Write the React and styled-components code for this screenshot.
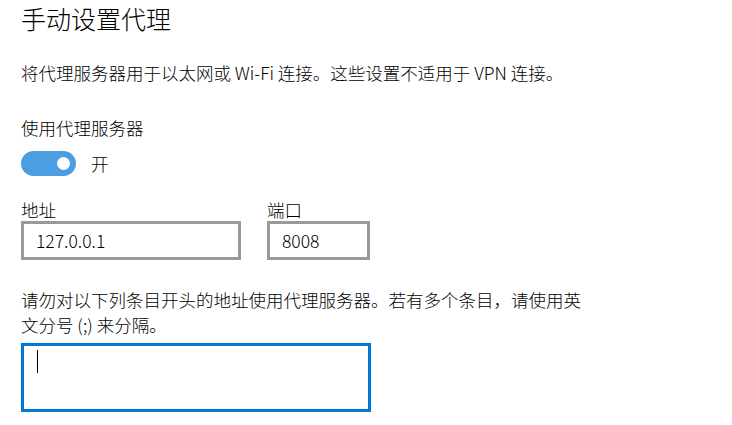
import React from "react";
import styled, { createGlobalStyle } from "styled-components";

const Global = createGlobalStyle`
  html, body { margin: 0; padding: 0; background: #ffffff; }
  body {
    font-family: "Noto Sans CJK SC", "Noto Sans", sans-serif;
    font-weight: 300;
    color: #000000;
    -webkit-font-smoothing: antialiased;
  }
  * { box-sizing: border-box; }
`;

const Page = styled.div`
  width: 732px;
  height: 425px;
  padding: 0 0 0 21px;
  overflow: hidden;
  display: flex;
  flex-direction: column;
`;

const Title = styled.h1`
  margin: 0;
  font-size: 25px;
  font-weight: 300;
  line-height: 37px;
  height: 37px;
`;

const Text = styled.p`
  margin: ${(p) => p.$mt || 0}px 0 0 0;
  font-size: 17.5px;
  line-height: 25px;
  max-width: ${(p) => (p.$maxWidth ? `${p.$maxWidth}px` : "none")};
`;

const ToggleRow = styled.div`
  margin-top: 11px;
  display: flex;
  align-items: center;
  gap: 15px;
  height: 25px;
`;

const Track = styled.div`
  width: 55px;
  height: 25px;
  border-radius: 13px;
  background: #4c9ee3;
  display: flex;
  align-items: center;
  justify-content: flex-end;
  padding-right: 6px;
`;

const Knob = styled.div`
  width: 13px;
  height: 13px;
  border-radius: 50%;
  background: #ffffff;
`;

const ToggleLabel = styled.span`
  font-size: 17.5px;
  line-height: 25px;
`;

const FieldRow = styled.div`
  margin-top: 24px;
  display: flex;
  gap: 26px;
`;

const Field = styled.div`
  display: flex;
  flex-direction: column;
  gap: 1px;
`;

const FieldLabel = styled.label`
  font-size: 17.5px;
  line-height: 20px;
  height: 20px;
`;

const Input = styled.input`
  width: ${(p) => p.$w}px;
  height: 39px;
  border: 3px solid #999999;
  padding: 0 0 0 12px;
  margin: 0;
  font-family: "Noto Sans CJK SC", "Noto Sans", sans-serif;
  font-weight: 300;
  font-size: 17.5px;
  color: #000000;
  background: #ffffff;
  outline: none;
`;

const Area = styled.div`
  margin-top: 6px;
  width: 350px;
  height: 69px;
  border: 3px solid #0078d7;
  padding: 4px 0 0 13px;
`;

const Caret = styled.span`
  display: block;
  width: 1px;
  height: 23px;
  background: #000000;
`;

export default function App() {
  return (
    <>
      <Global />
      <Page>
        <Title>手动设置代理</Title>
        <Text $mt={23}>将代理服务器用于以太网或 Wi-Fi 连接。这些设置不适用于 VPN 连接。</Text>
        <Text $mt={30}>使用代理服务器</Text>
        <ToggleRow>
          <Track>
            <Knob />
          </Track>
          <ToggleLabel>开</ToggleLabel>
        </ToggleRow>
        <FieldRow>
          <Field>
            <FieldLabel>地址</FieldLabel>
            <Input $w={220} value="127.0.0.1" readOnly />
          </Field>
          <Field>
            <FieldLabel>端口</FieldLabel>
            <Input $w={103} value="8008" readOnly />
          </Field>
        </FieldRow>
        <Text $mt={27} $maxWidth={566}>
          请勿对以下列条目开头的地址使用代理服务器。若有多个条目，请使用英文分号 (;) 来分隔。
        </Text>
        <Area>
          <Caret />
        </Area>
      </Page>
    </>
  );
}
